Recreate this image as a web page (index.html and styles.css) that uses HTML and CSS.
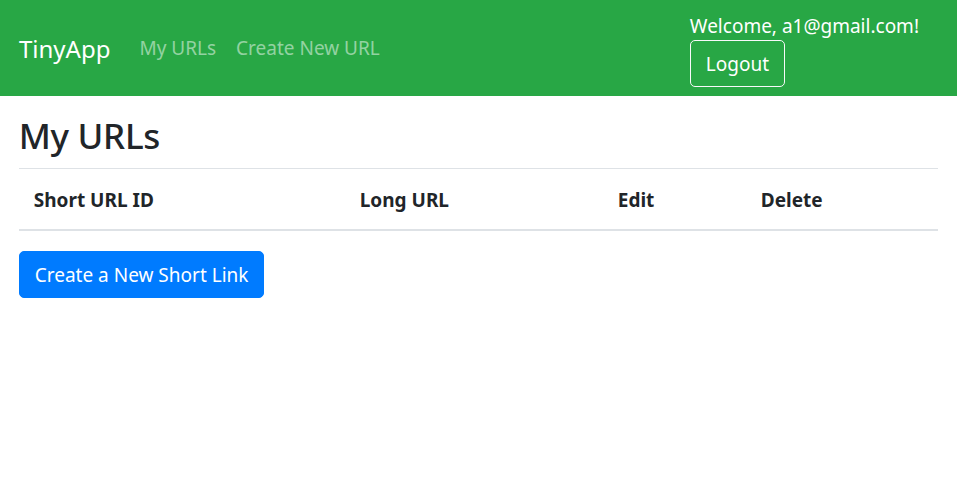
FILE: index.html
```html
<!DOCTYPE html>
<html lang="en">
<head>
<meta charset="utf-8">
<title>TinyApp</title>
<link rel="stylesheet" href="styles.css">
</head>
<body>
<nav class="navbar">
  <div class="nav-left">
    <a class="brand" href="#">TinyApp</a>
    <a class="nav-link" href="#">My URLs</a>
    <a class="nav-link" href="#">Create New URL</a>
  </div>
  <div class="nav-right">
    <div class="welcome">Welcome, a1@gmail.com!</div>
    <button class="btn btn-outline">Logout</button>
  </div>
</nav>
<main class="container">
  <h2 class="title">My URLs</h2>
  <table class="table">
    <thead>
      <tr>
        <th class="c1">Short URL ID</th>
        <th class="c2">Long URL</th>
        <th class="c3">Edit</th>
        <th class="c4">Delete</th>
      </tr>
    </thead>
  </table>
  <button class="btn btn-primary">Create a New Short Link</button>
</main>
</body>
</html>
```
FILE: styles.css
```css
* { box-sizing: border-box; }
html, body { margin: 0; padding: 0; }
body {
  font-family: "Noto Sans", "Open Sans", sans-serif;
  font-size: 19px;
  line-height: 30px;
  color: #212529;
  background: #fff;
}
.navbar {
  background: #28a745;
  height: 96px;
  padding: 10px 20px 10px 19px;
  display: flex;
  align-items: center;
  justify-content: space-between;
}
.nav-left { display: flex; align-items: center; }
.brand {
  color: #fff;
  text-decoration: none;
  font-size: 24px;
  line-height: 37px;
  margin-right: 19px;
}
.nav-link {
  color: rgba(255,255,255,.5);
  text-decoration: none;
  padding: 10px;
  font-size: 19px;
}
.nav-right {
  align-self: flex-start;
  margin-right: 18px;
  display: flex;
  flex-direction: column;
  align-items: flex-start;
  color: #fff;
}
.welcome { padding-top: 1px; }
.btn {
  font-family: inherit;
  font-size: 19px;
  line-height: 30px;
  padding: 7.5px 15px;
  border-radius: 5px;
  border: 1px solid transparent;
  cursor: pointer;
}
.btn-outline {
  background: transparent;
  color: #fff;
  border-color: #f8f9fa;
  margin-top: -1px;
}
.btn-primary {
  background: #007bff;
  border-color: #007bff;
  color: #fff;
}
.container { padding: 0 18.75px; }
.title {
  font-size: 35px;
  font-weight: 500;
  line-height: 48px;
  letter-spacing: -0.3px;
  margin: 16px 0 8px;
}
.table {
  width: 100%;
  border-collapse: collapse;
  margin-bottom: 20px;
}
.table th {
  text-align: left;
  font-weight: 700;
  padding: 16px 15px 14px;
  border-top: 1px solid #dee2e6;
  border-bottom: 2px solid #dee2e6;
}
.c1 { width: 326px; }
.c2 { width: 258px; }
.c3 { width: 143px; }
```
